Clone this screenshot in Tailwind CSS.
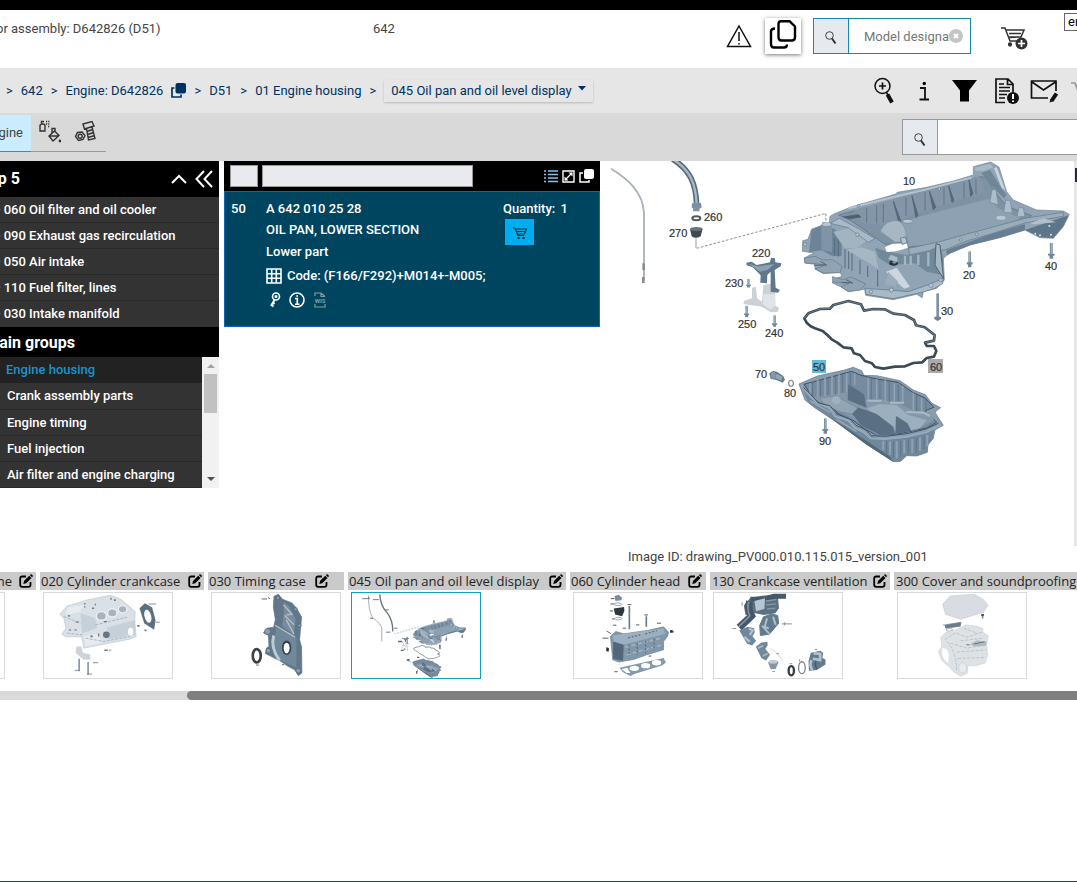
<!DOCTYPE html>
<html lang="en">
<head>
<meta charset="utf-8">
<title>Parts catalogue - Oil pan and oil level display</title>
<script src="https://cdn.jsdelivr.net/npm/@tailwindcss/browser@4"></script>
</head>
<body class="bg-white">
<svg class="hidden" aria-hidden="true">
  <defs>
    <symbol id="edit" viewBox="0 0 14 14"><path d="M7 2.500H3.200Q1.200 2.500 1.200 4.500V10.800Q1.200 12.800 3.200 12.800H9.500Q11.500 12.800 11.500 10.800V8" fill="none" stroke="#000" stroke-width="1.800"/><path d="M4.300 9.900 5 7 10.200 1.800 12.500 4.100 7.200 9.300ZM10.900 1.100 11.700.4Q12.200 0 12.700.4L13.700 1.400Q14.100 1.900 13.700 2.400L13 3.300Z"/></symbol>
    <symbol id="search" viewBox="0 0 12 14"><circle cx="4.500" cy="4.500" r="3.800" fill="none" stroke="#444" stroke-width="1"/><path d="M7 7.500 10.500 12.500" stroke="#333" stroke-width="2"/></symbol>
    <symbol id="bolt" viewBox="0 0 20 50" preserveAspectRatio="none"><path d="M6 0H14V34H6Z" fill="#7f91a2"/><path d="M9 0H11V34H9Z" fill="#aabac8"/><path d="M1 33H19V38L15 40V48H5V40L1 38Z" fill="#70869a"/></symbol>
    <symbol id="assembly" viewBox="0 0 474 385">
      <g transform="translate(0 -6) scale(.3333)">
        <path d="M33 41C80 70 130 110 132 175V375" fill="none" stroke="#8f9ba3" stroke-width="5"/>
        <path d="M33 41C80 70 130 110 132 175V375" fill="none" stroke="#d5dde2" stroke-width="1.500"/>
        <path d="M127 325H135V345H127ZM126 366H134V384H126Z" fill="#8b8f8c"/>
        <path d="M218 12C270 45 288 85 290 150" fill="none" stroke="#596d7e" stroke-width="17"/>
        <path d="M218 12C270 45 288 85 290 150" fill="none" stroke="#a7b8c6" stroke-width="7"/>
        <path d="M276 145 303 144 305 157 298 162 299 169H279L280 161 275 157Z" fill="#7b90a2"/>
        <ellipse cx="289" cy="190" rx="12" ry="6" fill="#fff" stroke="#4e565d" stroke-width="6"/>
        <path d="M270 222 308 221 302 244Q287 253 275 244Z" fill="#3e484e"/><ellipse cx="289" cy="222" rx="19" ry="6" fill="#66737c"/>
        <path d="M288 250V279" stroke="#999" stroke-width="3"/><path d="M290 280 678 175V205" fill="none" stroke="#777" stroke-width="2.500" stroke-dasharray="8 5"/>
        <path d="M456 398 468 395 471 430 486 440 490 390 525 385 526 452 537 458 534 470 512 472 485 455 430 447 433 437 456 430Z" fill="#cbd1d7"/><path d="M490 418 525 418 526 452 512 464 488 448Z" fill="#dfe4e8"/>
        <path d="M439 323 455 320 470 330 510 322 513 308 525 310 526 322 544 325 542 334 524 345 527 398 540 405 534 413 512 410 512 350 502 360 501 385 481 383 482 361 458 337 440 331Z" fill="#60788c"/>
        <path d="M445 326 474 334 524 327 502 345 480 350Z" fill="#8ba0b1"/>
        <use href="#bolt" x="437" y="371" width="17" height="28"/><use href="#bolt" x="431" y="452" width="18" height="36"/><use href="#bolt" x="515" y="481" width="18" height="36"/>
      </g>
      <g transform="translate(180 -6) scale(.3333)">
        <path d="M160 178 215 155 345 118 352 112 440 97 520 78 580 60V35L632 21 657 36 680 110 700 135 770 165 850 168 868 178 850 215 820 250 780 248 735 225 660 248 570 270 510 294 490 310 493 375 470 400 430 410 427 428 410 418 340 434 257 421 254 403 205 410 184 396 157 384 160 373 186 364 180 352 130 356 105 342 104 328 74 324 73 309 102 294 67 289 68 257 84 253 95 222 125 212 128 203 148 204 150 184Z" fill="#91a4b5" stroke="#6f8495" stroke-width="2"/>
        <path d="M176 180 600 65 618 67 640 105 680 153 755 182 735 201 480 268 375 278 380 263 315 268 210 195Z" fill="#7f92a4" stroke="#596e80" stroke-width="2"/>
        <path d="M300 235 330 215 410 187 625 132 655 160 720 189 705 202 470 268 385 273 382 250Z" fill="#8ea1b2"/>
        <path d="M220 165 600 64 615 114 570 125 460 160 370 190 310 210 245 205Z" fill="#8395a6"/>
        <path d="M260 160V204M290 151V205M310 145V202M378 127V182M435 112V167M492 98V150M552 82V131M588 74V118" stroke="#60758a" stroke-width="3"/>
        <path d="M340 138 357 205 363 200ZM396 122 408 188 414 181ZM448 108 460 165 467 157ZM506 93 516 142 522 137ZM567 75 572 124 579 117Z" fill="#53687a" stroke="#53687a" stroke-width="3"/>
        <path d="M205 160 345 125 440 103 575 68" fill="none" stroke="#b4c4d0" stroke-width="5"/>
        <path d="M642 40 650 36 676 106 665 99Z" fill="#c8d5df"/><path d="M584 38 630 27 640 37 610 48 586 47Z" fill="#a9bac7"/><path d="M604 54 630 45 665 100 680 120 672 130 635 94Z" fill="#70879a"/>
        <path d="M630 142 636 104H648L655 150ZM671 172 677 136H690L697 174ZM712 186 716 158H730L735 184Z" fill="#adbeca" stroke="#748a9d" stroke-width="2"/><ellipse cx="663" cy="188" rx="14" ry="6" fill="#b9c8d3"/><ellipse cx="383" cy="199" rx="15" ry="6" fill="#b9c8d3" stroke="#697e90" stroke-width="2"/>
        <path d="M385 280 480 260 550 240 625 220 735 190 850 172V184L735 204 635 236 560 258 500 283 390 302Z" fill="#9badbb" stroke="#61778a" stroke-width="2"/>
        <path d="M500 285 625 240 735 207V226L660 248 570 271 500 300Z" fill="#687f93"/>
        <path d="M735 225 790 206 866 181 848 216 820 249 782 247Z" fill="#5f768a"/><path d="M750 205 790 190 828 202 760 208Z" fill="#b0c1cd"/><g fill="#dce5eb"><circle cx="766" cy="236" r="3"/><circle cx="780" cy="241" r="3"/><circle cx="808" cy="213" r="3"/><circle cx="813" cy="239" r="3"/></g>
        <path d="M95 225 125 210 165 223 185 250V304L155 302 125 286 87 292Z" fill="#6d8397"/>
        <path d="M160 230 210 220 275 246 230 280 195 280 178 257Z" fill="#a3b4c1"/><path d="M150 205 178 190 235 221 285 251 265 262 205 218Z" fill="#a9bac6" stroke="#63798b" stroke-width="2"/>
        <path d="M185 185 235 178 245 187 208 193Z" fill="#4d6173"/>
        <path d="M123 212 128 203H152L156 214V290L125 286Z" fill="#7f95a7"/><ellipse cx="140" cy="208" rx="13" ry="5" fill="#b9c8d3"/>
        <path d="M164 248V302M175 254V305M195 282V340M206 287V342M216 293V347M240 315V358M263 333V366M293 345V395" stroke="#53697c" stroke-width="3"/>
        <path d="M285 278 325 291 380 300 450 285 480 270 490 310 487 360 440 350 405 325 330 330 297 310Z" fill="#72889b"/>
        <path d="M200 285 245 277 285 290 295 342 260 320 235 305Z" fill="#a6b7c3"/>
        <path d="M315 277 337 266 380 265 384 278 350 289 320 291Z" fill="#fff"/>
        <path d="M300 228Q320 190 358 198 380 213 380 260L345 262Z" fill="#a7b7c4" stroke="#798e9f" stroke-width="2"/><path d="M361 250 376 246 382 262 367 269Z" fill="#b7c5cf" stroke="#4f6374" stroke-width="2"/>
        <ellipse cx="341" cy="324" rx="13" ry="8" fill="#28323b"/><ellipse cx="343" cy="322" rx="6" ry="4" fill="#8193a2"/><path d="M324 312 333 299 352 307 353 322 334 316Z" fill="#a9bac7"/>
        <path d="M318 350 350 338 390 395 373 401 342 374Z" fill="#cbd6df"/><path d="M325 350 355 380 347 393 316 388Z" fill="#9aadbc"/>
        <path d="M375 302V330M392 302V330M415 300V330M445 292V334" stroke="#a5b6c3" stroke-width="7"/>
        <path d="M468 266 480 270 491 372 465 330Z" fill="#a6b7c4" stroke="#4d6274" stroke-width="3"/>
        <path d="M255 400 325 405 385 410 445 389 491 370 488 386 464 400 430 411 340 431 258 418Z" fill="#a9bac7" stroke="#5d7285" stroke-width="2"/>
        <path d="M73 309 105 304 128 315 157 314 186 333 181 353 130 354 106 342 135 330 105 326 76 324ZM157 365 190 374 213 366 258 387 240 405 205 409 183 396 207 385 159 381Z" fill="#8fa3b4" stroke="#62788b" stroke-width="2"/>
        <path d="M102 331 140 330 122 320M184 382 218 384 198 374" fill="none" stroke="#4f6375" stroke-width="3"/>
        <g fill="#bdccd6" stroke="#61778a" stroke-width="2"><circle cx="334" cy="405" r="6"/><circle cx="273" cy="410" r="5"/><circle cx="453" cy="391" r="6"/><circle cx="482" cy="375" r="5"/><circle cx="232" cy="239" r="5"/><circle cx="75" cy="268" r="5"/><circle cx="236" cy="152" r="4"/><circle cx="478" cy="102" r="4"/><circle cx="542" cy="255" r="4"/><circle cx="590" cy="238" r="4"/></g>
        <path d="M73 490 85 475 120 462 150 461 160 450 205 438 243 448 252 467 280 462 315 463 340 476 375 480 402 495 408 511 434 517 464 540 462 557 435 563 440 573 462 573 469 588 462 605 440 609 427 622 400 624 375 634 345 635 310 641 285 636 276 625 255 618 240 600 222 595 215 580 190 577 172 563 155 553 142 540 128 528 105 520 92 514 80 503Z" fill="none" stroke="#3c4a55" stroke-width="8" stroke-linejoin="round"/>
        <path d="M73 490 85 475 120 462 150 461 160 450 205 438 243 448 252 467 280 462 315 463 340 476 375 480 402 495 408 511 434 517 464 540 462 557 435 563" fill="none" stroke="#82929e" stroke-width="2"/>
        <use href="#bolt" x="559" y="289" width="20" height="50"/><use href="#bolt" x="803" y="263" width="22" height="50"/>
        <path d="M469 415H477V488H469Z" fill="#7e91a2"/><path d="M463 485H483V492L473 498 463 492Z" fill="#6d8295"/>
      </g>
      <g transform="translate(130 179) scale(.3333)">
        <path d="M207 132 262 108 340 91 370 82 395 92 402 106 440 107 510 122 550 150 586 164 606 190 632 203 615 216 626 235 640 256 615 270 610 295 594 315 592 337 560 348 530 347 512 364 490 365 410 313 310 240 255 204 225 180Z" fill="#899daf" stroke="#5f7587" stroke-width="2"/>
        <path d="M222 133 365 94 390 105 435 116 505 127 548 157 585 174 612 202 585 212 620 247 590 264 505 282 440 285 405 268 370 242 325 222 310 205 265 188 247 170Z" fill="#768b9e" stroke="#3e5365" stroke-width="3"/>
        <path d="M240 172 300 165 360 155 410 180 450 178 500 187 550 212 600 216 612 240 560 270 500 280 440 285 360 230 300 198Z" fill="#8598a9"/>
        <path d="M410 205 450 192 500 196 535 225 590 240 570 264 500 280 485 258Z" fill="#9bafbf"/>
        <path d="M240 130V170M263 120V171M285 112V169M306 108V165M327 103V165M350 99V155M374 100V135M415 113V180M440 118V178M466 120V185M493 130V185M518 138V190M550 158V212M575 173V215" stroke="#8fa3b4" stroke-width="5"/>
        <path d="M248 128V170M272 119V170M294 112V167M317 107V163M338 103V158M361 99V135M424 116V178M450 119V178M478 124V185M505 134V185M560 165V213M588 180V214" stroke="#5f7589" stroke-width="3"/>
        <path d="M355 133 402 163 410 203 353 180ZM382 202 440 222 490 260 496 287 450 285 395 257 365 220ZM498 228 532 249 544 273 496 281Z" fill="#5a6f82"/>
        <path d="M270 174 315 168 345 182 383 204 365 223 325 214 280 190Z" fill="#91a5b5" stroke="#6f8597" stroke-width="2"/><circle cx="319" cy="181" r="12" fill="#a0b1bf"/>
        <path d="M412 182H455M480 188H522M530 216 580 218 600 228" fill="none" stroke="#a9bac7" stroke-width="6"/>
        <path d="M220 150 250 180 310 218 355 247 403 280 440 293 495 294 560 283 612 264 610 295 594 315 592 337 560 348 530 347 512 364 490 365 410 313 310 240 235 188Z" fill="#71879a"/>
        <path d="M214 136 240 168 263 191 297 201 315 229 355 242 373 262 400 276 422 295 465 297 530 290 590 276 630 256" fill="none" stroke="#97aaba" stroke-width="6"/>
        <path d="M220 142 245 166 265 189 300 197 322 223 360 237 378 256 405 268 425 287 465 289 530 281 585 268 625 250" fill="none" stroke="#40566a" stroke-width="3"/>
        <path d="M460 302V330M480 304V345M500 304V355M523 300V340M547 297V340M570 292V333M592 285V318" stroke="#8ea2b3" stroke-width="6"/>
        <path d="M470 302V340M490 304V353M512 302V350M535 298V340M559 294V338M582 288V328" stroke="#5f7589" stroke-width="3"/><path d="M290 225 410 303 480 350 490 365 410 314Z" fill="#50667a"/>
        <path d="M240 182 300 218M320 238 380 275" stroke="#93a6b6" stroke-width="5"/>
        <path d="M118 100 130 92 142 96 160 108 165 119 158 128 137 119 122 117Z" fill="#66798a"/><path d="M139 101 158 110 154 122 136 115Z" fill="#91a4b4"/><ellipse cx="130" cy="106" rx="7" ry="11" fill="#8699aa"/>
        <ellipse cx="183" cy="130" rx="7" ry="9" fill="none" stroke="#8d9499" stroke-width="4"/><use href="#bolt" x="276" y="235" width="20" height="48"/>
      </g>
    </symbol>
  </defs>
</svg>

<div class="flex min-h-screen flex-col overflow-hidden border-b border-[#23424a] font-[Roboto,sans-serif] text-[13px] leading-5 text-[#444]">
  <div class="h-2.5 bg-black"></div>

  <header class="flex h-[58px] items-start justify-between overflow-hidden">
    <div class="-ml-1 flex pt-[9px]">
      <span class="w-[377px] whitespace-nowrap">or assembly: D642826 (D51)</span><span>642</span>
    </div>
    <div class="flex shrink-0 pt-2">
      <button class="mr-[13px] grid h-9 w-[27px] place-items-center" aria-label="Warnings"><svg class="size-[26px]" viewBox="0 0 26 26" fill="none" stroke="#111" stroke-width="1.500"><path d="M13 3 24.500 23.500H1.500Z"/><path d="M13 9V18M13 20V21.500"/></svg></button>
      <button class="mr-3 grid size-9 place-items-center bg-white shadow-[0_1px_4px_#0008]" aria-label="Copy"><svg class="mb-1 size-8" viewBox="0 0 32 32" fill="none" stroke="#000" stroke-width="2.400" stroke-linejoin="round"><path d="M14 3.200H22.500L28 8.500V19Q28 22.500 25 22.500H14.500Q11.500 22.500 11.500 19V6Q11.500 3.200 14 3.200Z"/><path d="M8 10.500Q4 10.500 4 13.500V26Q4 29.500 7 29.500H17Q20 29.500 20 26.500"/></svg></button>
      <form class="mr-[27px] flex h-9 w-[158px] border border-[#1488a8]">
        <button type="button" class="grid w-[35px] shrink-0 place-items-center border-r border-[#1488a8] bg-[#e6e9ed]" aria-label="Search model"><svg class="mt-1 h-3.5 w-3"><use href="#search"/></svg></button>
        <label class="relative flex-1"><input type="text" class="h-full w-[102px] pl-[15px] text-[13px] outline-none placeholder:text-[#777]" placeholder="Model designation" aria-label="Model designation"><svg class="absolute top-2.5 right-[7px] size-3.5" viewBox="0 0 14 14"><circle cx="7" cy="7" r="7" fill="#c5c5c5"/><path d="M5 5 9 9M9 5 5 9" stroke="#fff" stroke-width="2"/></svg></label>
      </form>
      <button class="grid h-9 w-8 place-items-center pt-1" aria-label="Add to cart"><svg class="h-6 w-7" viewBox="0 0 28 24" fill="none" stroke="#333" stroke-width="1.500"><path d="M1 2H5L10 15H18M6 4H24L21 11H9M9 7.500H21M10 11.500 19 11"/><circle cx="10" cy="18.500" r="1.400" fill="#333"/><circle cx="21.500" cy="17.500" r="6" fill="#333" stroke="none"/><path d="M18 17.500H25M21.500 14V21" stroke="#fff" stroke-width="1.700"/></svg></button>
      <div class="-mt-[5px] -mr-[3px] ml-[34px] h-[18px] w-4 overflow-hidden border border-[#666] pl-[3px] leading-4 text-black">er</div>
    </div>
  </header>

  <div class="flex h-[45px] items-center justify-between bg-[#e6e6e6] text-[#003261]">
    <nav class="flex items-center gap-2 pl-1.5 whitespace-nowrap" aria-label="Breadcrumb">
      <span>&gt;</span><a href="#">642</a><span>&gt;</span>
      <a href="#" class="flex items-center gap-2">Engine: D642826 <svg class="size-[15px]" viewBox="0 0 15 15"><path d="M3.500 5H1V14H10V11.500" fill="none" stroke="#003261" stroke-width="1.700"/><rect x="4.500" width="10.500" height="10.500" rx="2" fill="#003261"/></svg></a>
      <span>&gt;</span><a href="#">D51</a><span>&gt;</span><a href="#">01 Engine housing</a><span>&gt;</span>
      <button class="flex h-[22px] items-center gap-1.5 px-[7px] shadow-[0_1px_2px_#0003]">045 Oil pan and oil level display <svg class="mb-1 h-[5px] w-2" viewBox="0 0 8 5"><path d="M0 0H8L4 4.500Z" fill="#003261"/></svg></button>
    </nav>
    <div class="flex w-[213px] shrink-0 overflow-hidden">
      <button class="grid h-10 w-10 shrink-0 place-items-center" aria-label="Zoom in"><svg class="h-7 w-6" viewBox="0 0 24 28" fill="none" stroke="#111"><circle cx="10.500" cy="9" r="7.500" stroke-width="1.500"/><path d="M7 9H14M10.500 5.500V12.500" stroke-width="1.700"/><path d="M14.500 15.500 16 18" stroke-width="1.500"/><path d="M15.500 17.500 20 25.500" stroke-width="4"/></svg></button>
      <button class="grid h-10 w-10 shrink-0 place-items-center" aria-label="Information"><svg class="h-5 w-3" viewBox="0 0 12 20"><circle cx="6.300" cy="2.500" r="1.700"/><path d="M2 7H7V18M1.500 18.500H11" fill="none" stroke="#111" stroke-width="1.800"/></svg></button>
      <button class="grid h-10 w-10 shrink-0 place-items-center" aria-label="Filter"><svg class="h-[22px] w-[25px]" viewBox="0 0 25 22"><path d="M0 0H25L17 10.500V21.500H8V10.500Z"/></svg></button>
      <button class="grid h-10 w-10 shrink-0 place-items-center pl-1" aria-label="Notes"><svg class="h-7 w-[26px]" viewBox="0 0 26 28" fill="none" stroke="#111" stroke-width="1.700"><path d="M12 25.500H3V2H15L20 7V15M14.500 2V7.500H20M6 7H11M6 10.500H17M6 14H17M6 17.500H14M6 21H12"/><circle cx="20" cy="21" r="6" fill="#111" stroke="none"/><path d="M20 17V22M20 23.500V25" stroke="#fff" stroke-width="2"/></svg></button>
      <button class="grid h-10 w-10 shrink-0 place-items-center" aria-label="Mail"><svg class="h-6 w-7" viewBox="0 0 28 24" fill="none" stroke="#111" stroke-width="1.700"><path d="M18 19H1.500V2H26V12M2 3 13.500 11 25.500 3"/><path d="M26.500 14.500 21.500 22" stroke-width="4"/><path d="M20.500 20.500 19.500 23.500 22.500 22.500Z" fill="#111" stroke="none"/></svg></button>
      <button class="grid h-10 w-10 shrink-0 place-items-center" aria-label="Cart"><svg class="h-6 w-7" viewBox="0 0 28 24" fill="none" stroke="#999" stroke-width="1.500"><path d="M1 4H5L10 18H22M6 6H25L22 13H9"/></svg></button>
    </div>
  </div>

  <div class="flex h-12 items-start justify-between bg-[#d9d9d9]">
    <div class="mt-0.5 flex h-[37px] w-[106px] border-b border-[#999]">
      <button class="-mb-px flex w-[31px] items-center justify-end overflow-hidden border-b border-[#00a3d9] bg-[#c9edff] pr-2 whitespace-nowrap">Engine</button>
      <button class="grid w-9 place-items-center pb-1" aria-label="Operating fluids"><svg class="size-[23px]" viewBox="0 0 23 23" fill="none" stroke="#333" stroke-width="1.400"><path d="M2 6Q2 4 4 4H5Q7 4 7 6V11H2ZM3.500 4V1.500H6"/><path d="M8 1.500H12M8 4H12M10 6.500H12" stroke-dasharray="1.200 1"/><path d="M11 16 16.500 11 21 15.500 15 21ZM14 13V8.500H17V12M12 16H20"/><circle cx="22" cy="21" r=".7"/></svg></button>
      <button class="grid w-9 place-items-center pb-1" aria-label="Standard parts"><svg class="size-[23px]" viewBox="0 0 23 23" fill="none" stroke="#333" stroke-width="1.400"><path d="M3.500 12.500 8 12 11 15.500 9 19.500 4.500 20.500 1.500 16.500Z"/><circle cx="6.200" cy="16.300" r="2"/><path d="M9 4 18 1.500 20 6 10.500 9ZM12.500 8.500 14.500 20 21 18.500 18 7M13 11.500 18.500 9.500M13.500 14.500 19.500 12.500M14 17.500 20.500 15.500"/></svg></button>
    </div>
    <form class="mt-1.5 flex h-9 w-[175px] border border-r-0 border-[#999]">
      <button type="button" class="grid w-[35px] shrink-0 place-items-center border-r border-[#999] bg-[#e6e9ed]" aria-label="Search parts"><svg class="mt-1.5 h-3.5 w-3"><use href="#search"/></svg></button>
      <input type="text" class="w-full min-w-0 bg-white px-3 outline-none" aria-label="Search text">
    </form>
  </div>

  <main class="flex h-[385px]">
    <aside class="w-[219px] shrink-0 overflow-hidden bg-white font-medium text-white">
      <div class="flex h-9 items-center justify-between bg-black pr-1.5">
        <h2 class="flex w-5 justify-end text-base font-bold whitespace-nowrap">Top 5</h2>
        <div class="flex items-center gap-2">
          <button aria-label="Collapse"><svg class="h-5 w-4" viewBox="0 0 16 20" fill="none" stroke="#fff" stroke-width="2"><path d="M1 14 8 7 15 14"/></svg></button>
          <button aria-label="Hide panel"><svg class="h-5 w-[18px]" viewBox="0 0 18 20" fill="none" stroke="#fff" stroke-width="2"><path d="M9 2 1.500 10 9 18M17 2 9.500 10 17 18"/></svg></button>
        </div>
      </div>
      <ul class="-ml-1 bg-[#333] whitespace-nowrap">
        <li class="h-[26px] border-b border-[#292929] leading-[26px]"><a href="#">- 060 Oil filter and oil cooler</a></li>
        <li class="h-[26px] border-b border-[#292929] leading-[26px]"><a href="#">- 090 Exhaust gas recirculation</a></li>
        <li class="h-[26px] border-b border-[#292929] leading-[26px]"><a href="#">- 050 Air intake</a></li>
        <li class="h-[26px] border-b border-[#292929] leading-[26px]"><a href="#">- 110 Fuel filter, lines</a></li>
        <li class="h-[26px] leading-[26px]"><a href="#">- 030 Intake manifold</a></li>
      </ul>
      <div class="h-[30px] bg-black"><h2 class="flex w-[75px] justify-end text-base leading-8 font-bold whitespace-nowrap">Main groups</h2></div>
      <div class="flex">
        <ul class="flex-1 bg-[#333] whitespace-nowrap">
          <li class="h-[26px] bg-[#222] pl-1.5 leading-[26px] text-[#1c93c9]"><a href="#">Engine housing</a></li>
          <li class="h-[27px] border-b border-[#292929] pl-[7px] leading-[26px]"><a href="#">Crank assembly parts</a></li>
          <li class="h-[26px] border-b border-[#292929] pl-[7px] leading-[26px]"><a href="#">Engine timing</a></li>
          <li class="h-[26px] border-b border-[#292929] pl-[7px] leading-[26px]"><a href="#">Fuel injection</a></li>
          <li class="h-[26px] border-b border-[#292929] pl-[7px] leading-[26px]"><a href="#">Air filter and engine charging</a></li>
        </ul>
        <div class="flex w-[17px] flex-col items-center justify-between bg-[#f1f1f1] pb-[7px]" aria-hidden="true">
          <div class="flex flex-col items-center gap-1.5 pt-[7px]"><svg class="h-1 w-2" viewBox="0 0 8 4"><path d="M0 4 4 0 8 4Z" fill="#a3a3a3"/></svg><div class="h-[39px] w-[13px] bg-[#c1c1c1]"></div></div>
          <svg class="h-1 w-2" viewBox="0 0 8 4"><path d="M0 0 4 4 8 0Z" fill="#505050"/></svg>
        </div>
      </div>
    </aside>

    <section class="ml-[5px] w-[376px] shrink-0 font-medium text-white">
      <div class="flex h-[30px] items-center gap-1 bg-black px-1.5">
        <input type="text" class="h-[22px] w-7 border border-[#999] bg-[#e9eaed]" aria-label="Filter position">
        <input type="text" class="h-[22px] w-[211px] border border-[#999] bg-[#e9eaed]" aria-label="Filter part">
        <div class="ml-auto flex gap-1">
          <button aria-label="List"><svg class="size-3.5" viewBox="0 0 14 14" stroke="#83c5ed" stroke-width="1.500"><path d="M0 2H2M4 2H14M0 5.500H2M4 5.500H14M0 9H2M4 9H14M0 12.500H2M4 12.500H14"/></svg></button>
          <button aria-label="Expand"><svg class="size-[13px]" viewBox="0 0 13 13" fill="none" stroke="#fff" stroke-width="1.400"><path d="M1 1H12V12H1ZM3 10 10 3"/><path d="M6.500 2.500H10.500V6.500ZM2.500 6.500V10.500H6.500Z" fill="#fff" stroke="none"/></svg></button>
          <button aria-label="Copy list"><svg class="h-3.5 w-[15px]" viewBox="0 0 15 14"><path d="M4 4H1V13H10V11" fill="none" stroke="#fff" stroke-width="1.500"/><rect x="5" width="10" height="10" rx="2" fill="#fff"/></svg></button>
        </div>
      </div>
      <div class="flex h-[136px] border border-[#0868b8] bg-[#00455f] pt-[7px] pl-1.5">
        <span class="w-[35px]">50</span>
        <div class="flex w-[237px] flex-col items-start">
          <p>A 642 010 25 28</p><p class="mt-px">OIL PAN, LOWER SECTION</p><p class="mt-0.5">Lower part</p>
          <p class="mt-1 flex items-center gap-[5px] whitespace-nowrap"><svg class="size-4" viewBox="0 0 16 16" fill="none" stroke="#fff" stroke-width="1.600"><path d="M1 1H15V15H1ZM5.700 1V15M10.300 1V15M1 5.700H15M1 10.300H15"/></svg>Code: (F166/F292)+M014+-M005;</p>
          <div class="mt-1.5 ml-[3px] flex items-center gap-2">
            <button aria-label="Key"><svg class="h-4 w-3" viewBox="0 0 12 16" fill="none" stroke="#fff" stroke-width="1.600"><circle cx="7" cy="4.500" r="3.500"/><circle cx="7" cy="4.500" r=".7"/><path d="M5.500 8 2 14M4 10.500 5.500 12M2.500 13 4.500 14.500" stroke-width="2"/></svg></button>
            <button aria-label="Details"><svg class="size-4" viewBox="0 0 16 16" fill="none" stroke="#fff" stroke-width="1.600"><circle cx="8" cy="8" r="7"/><path d="M6 6.500H8.300V12M6 12.200H10.500M7.300 4H9"/></svg></button>
            <button class="text-[#899ba3]" aria-label="WIS"><svg class="h-4 w-3.5" viewBox="0 0 14 16" fill="none" stroke="currentColor" stroke-width="1.200"><path d="M2 4V1H8L12 4.500M8 1V4.500H12M2 12V15H12V12"/><text x="7" y="10.500" text-anchor="middle" fill="currentColor" stroke="none" font-size="6" font-weight="700">WIS</text></svg></button>
          </div>
        </div>
        <div><p>Quantity: <span class="ml-0.5">1</span></p><button class="ml-0.5 grid h-[26px] w-[29px] place-items-center bg-[#00adef]" aria-label="Add part to cart"><svg class="mt-0.5 h-3 w-4" viewBox="0 0 16 12" fill="none" stroke="#17323e" stroke-width="1.200"><path d="M1 1H3L6 8.500H12M3.500 2H14.500L12.500 7H5.500M5 4.500H13"/><circle cx="6.500" cy="11" r=".7"/><circle cx="11.500" cy="11" r=".7"/></svg></button></div>
      </div>
    </section>

    <section class="relative flex min-w-0 flex-1" aria-label="Exploded drawing">
      <svg class="h-[385px] w-[474px] shrink-0" viewBox="0 0 474 385" font-family="Liberation Sans, sans-serif" font-size="11" fill="#333">
        <use href="#assembly" width="474" height="385"/>
        <rect x="212" y="199" width="14" height="13" fill="#63bad4"/><rect x="328" y="198" width="15" height="14" fill="#aaa"/>
        <g stroke="#333" stroke-width=".2"><text x="303" y="24">10</text><text x="363" y="118">20</text><text x="341" y="154">30</text><text x="445" y="109">40</text><text x="213" y="210">50</text><text x="330" y="210">60</text><text x="155" y="217">70</text><text x="184" y="236">80</text><text x="219" y="284">90</text><text x="152" y="96">220</text><text x="125" y="126">230</text><text x="165" y="176">240</text><text x="138" y="167">250</text><text x="104" y="60">260</text><text x="69" y="76">270</text></g>
      </svg>
      <div class="flex-1 bg-[#e6e6e6]"><div class="mt-[7px] ml-px h-3.5 bg-[#29224a]"></div></div>
    </section>
  </main>

  <p class="pt-px pl-[628px] whitespace-nowrap">Image ID: drawing_PV000.010.115.015_version_001</p>

  <section class="mt-[5px] flex gap-1 overflow-hidden font-['Open_Sans',sans-serif] text-[13px] text-[#222]" aria-label="Drawings">
    <a href="#" class="w-9 shrink-0"><span class="flex h-[18px] items-center justify-between bg-[#cacaca] pr-[3px]"><span class="flex w-3 justify-end">ne</span><svg class="size-3.5"><use href="#edit"/></svg></span><span class="mt-0.5 block h-[87px] w-[5px] border border-l-0 border-[#d9dadb]"></span></a>

    <a href="#" class="w-[164px] shrink-0"><span class="flex h-[18px] items-center justify-between bg-[#cacaca] pr-0.5 pl-px whitespace-nowrap">020 Cylinder crankcase<svg class="size-3.5"><use href="#edit"/></svg></span>
      <svg class="mt-0.5 ml-[3px] h-[87px] w-[130px] border border-[#d9dadb]" viewBox="131 84 384 256">
        <path d="M178 148 200 123 260 105 330 91 362 103 405 140 403 170 408 215 388 223 250 250 245 216 195 216 184 208 196 190 190 160Z" fill="#d9e0e6" stroke="#bcc7d0" stroke-width="2"/>
        <path d="M240 145 285 160 290 190 245 205ZM320 188 405 165 405 210 325 224Z" fill="#c6d0d9"/><path d="M200 128 250 120 240 140 196 150ZM250 215 300 205 300 235 254 244Z" fill="#e8ecf0"/>
        <g fill="#a7b4c0" stroke="#edf0f3" stroke-width="4"><ellipse cx="303" cy="153" rx="15" ry="13"/><ellipse cx="336" cy="144" rx="14" ry="12"/><ellipse cx="367" cy="133" rx="13" ry="11"/></g><circle cx="318" cy="210" r="10" fill="#657483"/><ellipse cx="391" cy="201" rx="8" ry="12" fill="#fff"/>
        <path d="M190 155 240 175M200 205 245 210M255 220 310 230 390 215M285 180 380 157" fill="none" stroke="#aab6c1" stroke-width="3" stroke-dasharray="9 4"/><g fill="#6b7780"><path d="M251 114H255V119H251ZM251 124H255V128H251ZM283 116H287V121H283ZM275 128H281V132H275ZM330 98H334V104H330ZM341 103H346V108H341ZM202 151H209V155H202ZM225 170H235V173H225ZM205 194H212V197H205ZM222 194H229V197H222ZM293 206H297V215H293ZM270 212H277V217H270ZM310 168H320V171H310ZM312 254H322V259H312ZM326 255H333V257H326ZM411 180H418V186H411ZM433 194H439V199H433Z"/></g>
        <path d="M418 130 434 115 456 128 466 165 462 195 432 175Z" fill="#5c6f80"/><ellipse cx="443" cy="154" rx="10" ry="20" transform="rotate(-15 443 154)" fill="#fff"/><path d="M445 117H468M466 172H479M277 294H294M223 317H237M260 328H275" stroke="#8a939a" stroke-width="3"/>
        <path d="M228 246 242 244 247 264 270 269 270 284 250 285 225 264Z" fill="#cdd3d9"/><path d="M236 282V320M263 292V330" stroke="#6d7e8d" stroke-width="4"/>
      </svg></a>

    <a href="#" class="w-[136px] shrink-0"><span class="flex h-[18px] items-center justify-between bg-[#cacaca] pr-[15px] pl-px whitespace-nowrap">030 Timing case<svg class="size-3.5"><use href="#edit"/></svg></span>
      <svg class="mt-0.5 ml-[3px] h-[87px] w-[130px] border border-[#d9dadb]" viewBox="635 84 384 256">
        <path d="M821 94 834 88 847 103 875 114 889 130 904 156 898 225 904 247 905 325 894 333 884 316 862 304 839 288 816 277 795 266 798 250 806 245 804 211 789 204 800 190 820 187 825 164 819 126Z" fill="#62788a" stroke="#5b7082" stroke-width="2"/>
        <path d="M827 187 889 218 888 308 835 285 820 245Z" fill="#71879a"/><path d="M850 110 866 125 886 162 880 210 846 185 850 145Z" fill="#778c9e"/>
        <path d="M850 120 875 148 858 150M853 152 882 180M858 165 881 207M824 181 884 217" fill="none" stroke="#b3c1cc" stroke-width="4"/>
        <path d="M820 212Q810 250 838 287" fill="none" stroke="#bccbd5" stroke-width="9"/><ellipse cx="859" cy="249" rx="14" ry="22" fill="#33424f"/><ellipse cx="859" cy="250" rx="9" ry="16" fill="#fff"/><ellipse cx="769" cy="273" rx="12" ry="20" fill="#fff" stroke="#3c4248" stroke-width="8"/>
        <path d="M784 102H800M803 98 809 101M767 301H775M845 300H852" stroke="#666" stroke-width="3"/><g fill="#8ba0b1" stroke="#4d6171" stroke-width="2"><circle cx="833" cy="99" r="5"/><circle cx="802" cy="200" r="9"/><circle cx="804" cy="258" r="7"/><circle cx="894" cy="318" r="7"/><circle cx="898" cy="182" r="5"/><circle cx="886" cy="133" r="5"/></g>
      </svg></a>

    <a href="#" class="w-[218px] shrink-0"><span class="flex h-[18px] items-center justify-between bg-[#cacaca] pr-[3px] pl-px whitespace-nowrap">045 Oil pan and oil level display<svg class="size-3.5"><use href="#edit"/></svg></span>
      <svg class="mt-0.5 ml-[3px] h-[87px] w-[130px] border border-[#17a0bb]" viewBox="35 84 384 256">
        <svg x="97" y="158" width="284" height="231" viewBox="0 0 474 385"><svg x="56" y="0" width="418" height="385" viewBox="56 0 418 385"><svg x="120" y="0" width="354" height="385" viewBox="120 0 354 385"><use href="#assembly" width="474" height="385"/></svg></svg></svg>
        <path d="M84 91Q83 135 96 158 122 177 124 190V230" fill="none" stroke="#a5b0b7" stroke-width="3"/><path d="M118 89Q120 122 138 141 158 165 157 200" fill="none" stroke="#67747e" stroke-width="4"/><path d="M65 101H83M97 104H115M134 135H145M88 160H98M137 202H150M161 190H171" stroke="#737b81" stroke-width="3"/><circle cx="85" cy="100" r="3" fill="#777"/><path d="M161 207 240 184" stroke="#aaa" stroke-width="2" stroke-dasharray="5 4"/><path d="M281 166V174M318 220V228M366 211V219M299 240V252M201 285H208M173 230H185M190 253H195M297 307H303M229 319V327M181 257H190M230 278H237" stroke="#606c75" stroke-width="4"/>
      </svg></a>

    <a href="#" class="w-[136px] shrink-0"><span class="flex h-[18px] items-center justify-between bg-[#cacaca] pr-1 pl-px whitespace-nowrap">060 Cylinder head<svg class="size-3.5"><use href="#edit"/></svg></span>
      <svg class="mt-0.5 ml-[3px] h-[87px] w-[130px] border border-[#d9dadb]" viewBox="701 84 384 256">
        <path d="M822 93 835 89 845 98 843 106 825 108Z" fill="#7990a3"/><ellipse cx="833" cy="118" rx="12" ry="4" fill="none" stroke="#9aa" stroke-width="3"/><path d="M820 131 851 126 852 138 845 154 824 149Z" fill="#2f363d"/><ellipse cx="834" cy="161" rx="11" ry="4" fill="none" stroke="#9aa" stroke-width="3"/>
        <path d="M867 123V193M918 154V186" stroke="#667b8d" stroke-width="5"/><path d="M811 101H822M810 117H822M808 138H818M815 162H823M861 119H873M912 150H923M818 181H828M847 190H857M887 180H897M950 175H962M799 199 811 206M786 220H804M990 201H1002M925 274H933M822 321H832" stroke="#555f67" stroke-width="3"/>
        <path d="M810 214 826 200 850 207 920 197 970 186 985 202 982 214 970 230V255L920 270 880 284 835 292 817 285Z" fill="#8198ab" stroke="#6a8093" stroke-width="2"/><path d="M817 212 970 190 975 207 850 240 820 235Z" fill="#9db0bf"/><path d="M818 230 850 240 848 288 818 282Z" fill="#52677a"/>
        <path d="M855 247 965 219M859 270 967 240" stroke="#a4b5c3" stroke-width="5" stroke-dasharray="12 7"/><path d="M863 219 900 210M915 207 950 197M866 240V274M891 235V270M916 228V265M941 222V257" stroke="#5a7083" stroke-width="4" stroke-dasharray="6 5"/><path d="M798 247 806 251 804 262 797 258ZM989 197 997 195 998 203 990 204Z" fill="#28313a"/>
        <path d="M837 309 970 280 977 293 965 302 882 328 870 334 848 323Z" fill="#8399ab"/><g fill="#fff"><ellipse cx="882" cy="311" rx="14" ry="8"/><ellipse cx="916" cy="303" rx="14" ry="8"/><ellipse cx="949" cy="294" rx="14" ry="8"/><path d="M843 313 861 309 870 325 859 325Z"/></g>
      </svg></a>

    <a href="#" class="w-[180px] shrink-0"><span class="flex h-[18px] items-center justify-between bg-[#cacaca] pr-[3px] pl-0.5 whitespace-nowrap">130 Crankcase ventilation<svg class="size-3.5"><use href="#edit"/></svg></span>
      <svg class="mt-0.5 ml-[3px] h-[87px] w-[130px] border border-[#d9dadb]" viewBox="41 84 384 256">
        <path d="M130 122 150 98 185 92 232 88 236 130 225 145 190 150 165 145 135 150Z" fill="#5c7183"/>
        <path d="M150 103 192 103 220 94 257 94" fill="none" stroke="#46596a" stroke-width="15"/><path d="M148 110Q140 130 153 153 136 170 116 188" fill="none" stroke="#455768" stroke-width="22"/><path d="M145 110Q138 130 148 153 132 170 114 186" fill="none" stroke="#8093a3" stroke-width="5"/><path d="M162 108 194 100 192 132 167 139Z" fill="#b6c6d3"/><path d="M196 108 228 104M197 120 228 117M200 132 225 130" stroke="#8698a7" stroke-width="4"/>
        <path d="M189 156 215 147 232 152 235 175 207 208 180 212 178 182Z" fill="#637a8d" stroke="#637a8d" stroke-width="3" stroke-linejoin="round"/>
        <path d="M200 160 193 186 205 190M185 182 207 207M218 155 226 180" fill="none" stroke="#aebdca" stroke-width="6"/>
        <path d="M116 196 142 186 161 190 163 202 156 214 167 228 155 242 140 237Z" fill="#71879a"/><path d="M145 191 157 197 148 210M132 216 148 231" fill="none" stroke="#b1c0cc" stroke-width="7"/>
        <path d="M166 246 183 233 201 231 202 241 195 253 209 270 197 287 183 280Z" fill="#71879a"/><path d="M172 250 188 243M187 274 202 266" stroke="#a8b8c5" stroke-width="5"/><path d="M203 293Q217 280 235 292L226 313 211 314Z" fill="#8195a5"/><ellipse cx="218" cy="291" rx="13" ry="6" fill="#c0cbd4"/>
        <path d="M210 250 232 267 248 290" fill="none" stroke="#c3c9ce" stroke-width="2"/><path d="M244 177H275M253 172V182M125 112V122M96 191H107M268 297H276M298 284V290M344 254H351M216 320H224M228 267H236" fill="none" stroke="#8a949b" stroke-width="3"/><ellipse cx="273" cy="318" rx="8" ry="14" fill="#fff" stroke="#353b40" stroke-width="7"/><ellipse cx="305" cy="309" rx="10" ry="18" fill="none" stroke="#777e84" stroke-width="4"/>
        <path d="M332 264 360 258 369 264 367 280 376 284V299L350 316 326 318 325 289Z" fill="#637b8f"/><path d="M340 266 360 267 360 286 338 282M334 286Q327 300 336 316" fill="none" stroke="#b3c2ce" stroke-width="8"/><path d="M348 288Q343 300 350 313" fill="none" stroke="#42576a" stroke-width="4"/>
      </svg></a>

    <a href="#" class="w-[230px] shrink-0"><span class="flex h-[18px] items-center bg-[#cacaca] pl-0.5 whitespace-nowrap">300 Cover and soundproofing</span>
      <svg class="mt-0.5 ml-[3px] h-[87px] w-[130px] border border-[#d9dadb]" viewBox="593 84 384 256">
        <path d="M727 117 750 93 820 88 849 103 863 121 850 142 781 163 735 148Z" fill="#d9dde3" stroke="#c5cbd2" stroke-width="2"/><path d="M843 147H851V154H843ZM846 155H849V161H846Z" fill="#4a545d"/><path d="M734 180 782 172 780 184 736 190ZM728 180H734" fill="#697b8b" stroke="#697b8b" stroke-width="2"/><ellipse cx="747" cy="195" rx="10" ry="4" fill="none" stroke="#a9b2ba" stroke-width="3"/>
        <path d="M721 219 735 203 765 196 797 180 830 184 848 191 848 202 864 213 859 240 862 270 855 295 825 303 802 303 802 325 781 335 759 321 745 305 724 287 714 260 724 245Z" fill="#dee2e5" stroke="#cdd2d6" stroke-width="2"/><path d="M733 224 765 204 800 217 845 202M750 235 800 250 860 240M770 262 858 255M772 281 854 278M740 230Q770 265 768 318M790 190 830 205M780 228 850 220" fill="none" stroke="#bdc4ca" stroke-width="3" stroke-dasharray="10 4"/><path d="M726 250Q751 250 743 295 720 280 726 250Z" fill="#fff"/><ellipse cx="787" cy="309" rx="12" ry="16" fill="#e8ebed" stroke="#c6ccd1" stroke-width="2"/><path d="M809 238 830 226 860 231 857 243 823 245Z" fill="#b1bbc4"/><path d="M798 240H808M820 238 853 231" stroke="#657583" stroke-width="3"/>
      </svg></a>
  </section>
  <div class="mt-3 h-[9px] bg-[#dadada] pl-[187px]" aria-hidden="true"><div class="h-full rounded-l-full bg-[#7f7f7f]"></div></div>
</div>
</body>
</html>
